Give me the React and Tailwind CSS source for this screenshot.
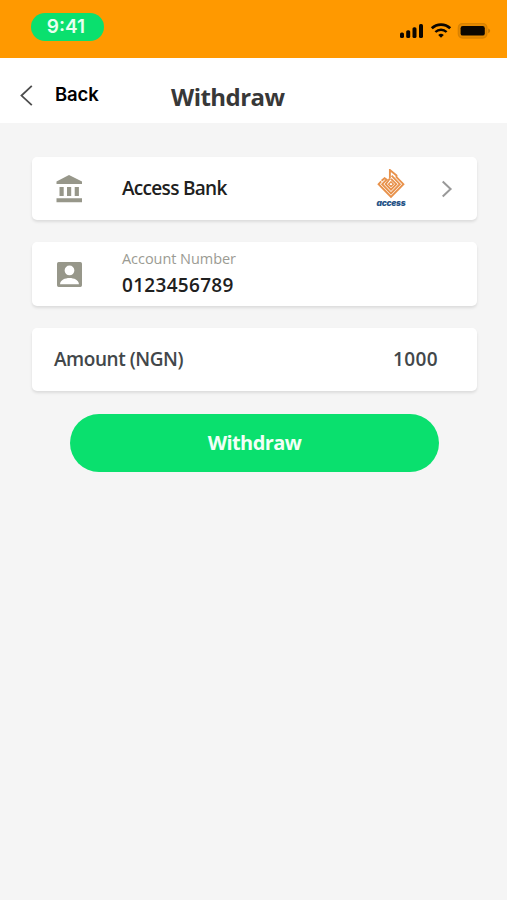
import React from 'react';

function StatusBar() {
  return (
    <div className="flex h-[58px] items-start justify-between bg-[#ff9900] pl-[31px] pr-[16px]">
      <div className="mt-[12.5px] flex h-[28px] w-[73px] items-center justify-center rounded-full bg-[#0ae06e] pr-[3px] font-['Inter',sans-serif] text-[19px] font-semibold leading-none text-[#e8fff0]">
        9:41
      </div>
      <div className="mt-[22px] flex items-start">
        <svg width="25" height="17" viewBox="0 0 25 17" fill="#0b0600">
          <rect x="1" y="10.6" width="4" height="5.4" rx="1.6" />
          <rect x="7.2" y="8.2" width="4" height="7.8" rx="1.6" />
          <rect x="13.5" y="5.2" width="4" height="10.8" rx="1.6" />
          <rect x="20" y="2" width="4" height="14" rx="1.6" />
        </svg>
        <svg className="ml-[6px]" width="22" height="17" viewBox="0 0 22 17" fill="none" stroke="#0b0600">
          <path d="M1.8 6.3 A13.2 13.2 0 0 1 20.2 6.3" strokeWidth="2.7" />
          <path d="M5.4 10 A8 8 0 0 1 16.6 10" strokeWidth="2.4" />
          <path d="M11 15.8 L8.2 13 A4.2 4.2 0 0 1 13.8 13 Z" fill="#0b0600" stroke="none" />
        </svg>
        <svg className="ml-[5px]" width="34" height="17" viewBox="0 0 34 17">
          <rect x="1.4" y="1.6" width="28.4" height="14.4" rx="4" fill="#e68a00" stroke="#d98200" strokeWidth="1.4" />
          <rect x="3.6" y="4" width="24.2" height="9.6" rx="2.2" fill="#0b0600" />
          <path d="M31.2 6.6 C33.8 7.6 33.8 10.2 31.2 11.2 Z" fill="#c77700" />
        </svg>
      </div>
    </div>
  );
}

function Header() {
  return (
    <header className="flex h-[65px] items-start bg-white pl-[19px]">
      <svg className="mt-[26px]" width="15" height="23" viewBox="0 0 15 23" fill="none" stroke="#4d4d4d" strokeWidth="1.8">
        <path d="M12.8 1.8 L2.5 11.6 L12.8 21.2" />
      </svg>
      <span className="mt-[24px] w-[116px] pl-[21px] font-['Inter',sans-serif] text-[18.5px] font-semibold leading-[24px] tracking-[-0.1px] text-black">
        Back
      </span>
      <h1 className="ml-[21px] mt-[23px] whitespace-nowrap text-[24px] font-bold leading-[32px] tracking-[-0.55px] text-[#383838]">
        Withdraw
      </h1>
    </header>
  );
}

function BankIcon() {
  return (
    <svg className="shrink-0" width="27" height="29" viewBox="0 0 27 29" fill="#97978a">
      <path d="M13 1 L26 7.5 V10 H0.5 V7.5 Z" />
      <path d="M3.5 13h4.2v9H3.5zM11 13h4.2v9H11zM18.7 13h4.2v9h-4.2zM0.5 24.2h25.5v4h-25.5z" />
    </svg>
  );
}

function AccountIcon() {
  return (
    <svg className="mt-[1px] shrink-0" width="25" height="25" viewBox="3 3 18 18" fill="#97978a">
      <path
        fillRule="evenodd"
        d="M4.2 3h15.6a1.2 1.2 0 0 1 1.2 1.2v15.6a1.2 1.2 0 0 1-1.2 1.2H4.2A1.2 1.2 0 0 1 3 19.8V4.2A1.2 1.2 0 0 1 4.2 3zM12 5.6a3.5 3.5 0 1 0 0 7 3.5 3.5 0 0 0 0-7zM5.2 19h13.6c0-2.9-3.6-4.4-6.8-4.4S5.2 16.1 5.2 19z"
      />
    </svg>
  );
}

function AccessLogo() {
  return (
    <div className="flex w-[32px] flex-col items-center">
      <svg width="28" height="30" viewBox="0 0 28 30" fill="none" stroke="#e8924c" strokeWidth="1.9">
        <path d="M4.2 12.4 L1.6 15.2 L14 28 L26.4 15.2 L19.5 8.2 V6.4 L12.9 1 V9.5" />
        <path d="M4.6 11.8 L7.6 9.2 L9.6 10.6 L5.2 15.2 L14 24.3 L22.8 15.2 L14.6 6.6" />
        <path d="M12.9 9.5 L8.7 15.2 L14 20.7 L19.3 15.2 L14 9.8" />
        <path d="M14 12.8 L16.4 15.2 L14 17.6 L11.6 15.2 Z" strokeWidth="1.4" />
      </svg>
      <span className="mt-[-1px] font-['Inter',sans-serif] text-[8.5px] font-black italic leading-[10px] tracking-[-0.3px] text-[#285487]">
        access
      </span>
    </div>
  );
}

const card = 'flex items-center rounded-[5px] bg-white shadow-[0_2px_3px_rgba(0,0,0,0.1)]';

export default function App() {
  return (
    <div className="h-[900px] w-[507px] overflow-hidden bg-[#f5f5f5] font-['Open_Sans','Noto_Sans',sans-serif]">
      <StatusBar />
      <Header />
      <main className="flex flex-col pl-[32px] pr-[30px] pt-[34px]">
        <section className={card + ' h-[63px] pl-[24px]'}>
          <BankIcon />
          <span className="ml-[39px] w-[253px] whitespace-nowrap pb-[2px] text-[19px] font-semibold leading-[24px] tracking-[-0.7px] text-[#202020]">
            Access Bank
          </span>
          <AccessLogo />
          <svg className="ml-[34px]" width="12" height="18" viewBox="0 0 12 18" fill="none" stroke="#999999" strokeWidth="2">
            <path d="M1.7 1.5 L9.6 9 L1.7 16.5" />
          </svg>
        </section>
        <section className={card + ' mt-[22px] h-[64px] pl-[25px]'}>
          <AccountIcon />
          <div className="ml-[40px] flex flex-col whitespace-nowrap pb-[2px]">
            <span className="text-[14.5px] leading-[20px] tracking-[-0.05px] text-[#9b9b93]">Account Number</span>
            <span className="mt-[4px] text-[19px] font-semibold leading-[24px] tracking-[0.3px] text-[#202020]">0123456789</span>
          </div>
        </section>
        <section className={card + ' mt-[22px] h-[63px] justify-between pl-[22px] pr-[39px] text-[19px] font-semibold text-[#42474a]'}>
          <span className="pb-[1px] tracking-[-0.45px]">Amount (NGN)</span>
          <span className="pb-[1px] tracking-[0.4px]">1000</span>
        </section>
        <button className="ml-[38px] mt-[22.5px] flex h-[58px] w-[369px] items-center justify-center rounded-full bg-[#0ae06e] text-[20px] font-bold tracking-[-0.6px] text-[#f2fff7]">
          Withdraw
        </button>
      </main>
    </div>
  );
}
